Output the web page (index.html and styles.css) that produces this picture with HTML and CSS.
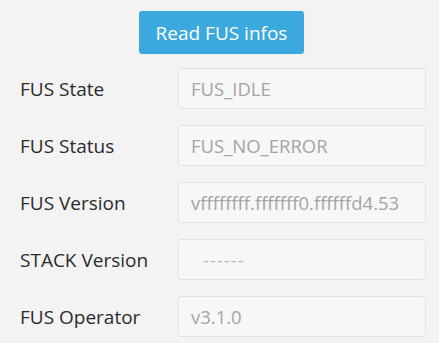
FILE: index.html
```html
<!DOCTYPE html>
<html lang="en">
<head>
    <meta charset="UTF-8">
    <title>FUS Information</title>
    <link rel="stylesheet" href="styles.css">
</head>
<body>

<div class="panel">
    <div class="actions">
        <button class="btn-read">Read FUS infos</button>
    </div>

    <!-- Info rows -->
    <div class="info-list">
        <div class="info-row">
            <span class="info-label">FUS State</span>
            <input class="info-field" type="text" value="FUS_IDLE" readonly>
        </div>
        <div class="info-row">
            <span class="info-label">FUS Status</span>
            <input class="info-field" type="text" value="FUS_NO_ERROR" readonly>
        </div>
        <div class="info-row">
            <span class="info-label">FUS Version</span>
            <input class="info-field" type="text" value="vffffffff.fffffff0.ffffffd4.53" readonly>
        </div>
        <div class="info-row">
            <span class="info-label">STACK Version</span>
            <input class="info-field empty" type="text" value="------" readonly>
        </div>
        <div class="info-row">
            <span class="info-label">FUS Operator</span>
            <input class="info-field" type="text" value="v3.1.0" readonly>
        </div>
    </div>
</div>

</body>
</html>
```

FILE: styles.css
```css
body {
    margin: 0;
    font-family: 'Open Sans', 'Noto Sans', sans-serif;
    background: #f3f3f3;
    color: #333;
}

.panel {
    padding: 11px 13px 0 20px;
}

/* Button */
.actions {
    display: flex;
    justify-content: center;
    padding-right: 3px;
}

.btn-read {
    width: 165px;
    height: 43px;
    background: #3ba9dd;
    color: #fff;
    border: none;
    border-radius: 3px;
    font-family: inherit;
    font-size: 19px;
    cursor: pointer;
}

/* Rows */
.info-list {
    display: flex;
    flex-direction: column;
    gap: 16px;
    margin-top: 14px;
}

.info-row {
    display: flex;
    align-items: center;
}

.info-label {
    width: 158px;
    font-size: 19px;
    color: #2b2b2b;
}

.info-field {
    box-sizing: border-box;
    width: 248px;
    height: 41px;
    padding: 0 12px;
    background: #f7f7f7;
    border: 1px solid #e2e2e2;
    border-radius: 3px;
    font-family: inherit;
    font-size: 18.5px;
    color: #a4a4a4;
    outline: none;
}

.info-field.empty {
    padding-left: 24px;
    letter-spacing: 1px;
    color: #b8b8b8;
}
```
